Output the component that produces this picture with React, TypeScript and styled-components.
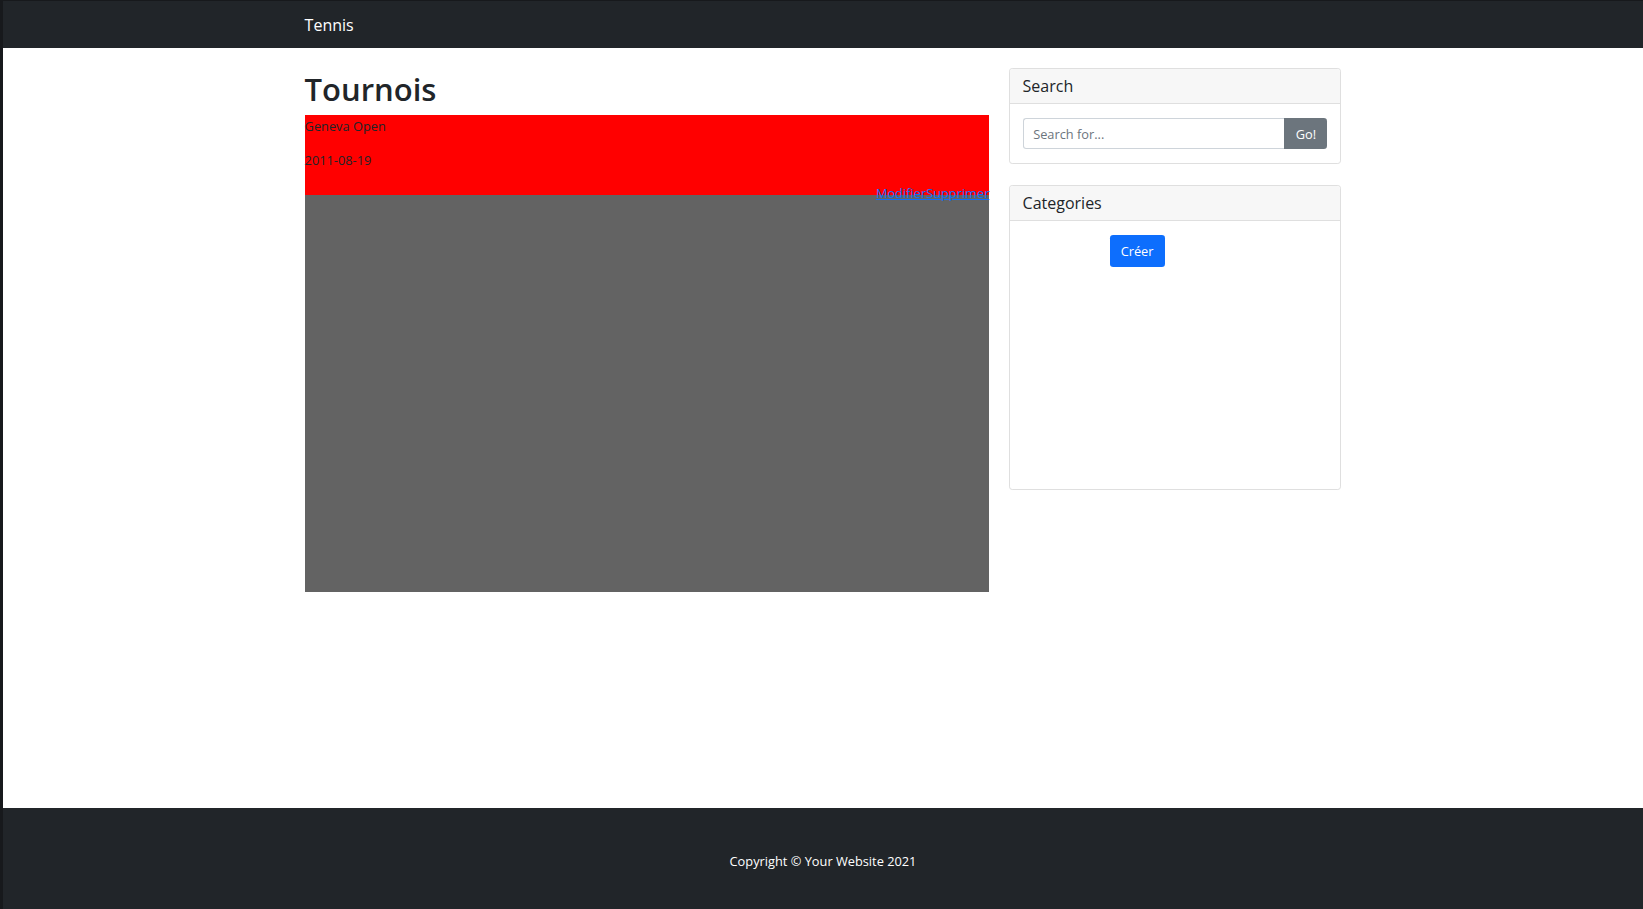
import React from "react";
import styled, { createGlobalStyle } from "styled-components";

const GlobalStyle = createGlobalStyle`
    * {
        box-sizing: border-box;
    }
    body {
        margin: 0;
        font-family: "Open Sans", "Noto Sans", sans-serif;
        font-size: 12.8px;
        line-height: 1.5;
        color: #212529;
        background: #ffffff;
    }
`

//STYLED COMPONENTS:
const Frame = styled.div`
    min-height: 100vh;
    display: flex;
    flex-direction: column;
    border-left: 3px solid #17191c;
    border-top: 1px solid #17191c;
`

const Container = styled.div`
    width: 1056px;
    margin: 0 auto;
    padding: 0 9.6px;
`

const Navbar = styled.nav`
    height: 47px;
    background: #212529;
    display: flex;
    align-items: center;
`

const Brand = styled.a`
    color: #ffffff;
    font-size: 16px;
    line-height: 24px;
    text-decoration: none;
`

const Main = styled.main`
    flex: 1;
    padding-top: 20px;
`

const Row = styled.div`
    display: grid;
    grid-template-columns: 684.8px 332.8px;
    column-gap: 19.2px;
    align-items: start;
`

const PageTitle = styled.h1`
    margin: 5px 0 9px;
    font-size: 31px;
    font-weight: 600;
    line-height: 33px;
`

const TournamentCard = styled.div`
    height: 80px;
    background: #ff0000;
    color: #212529;
    padding-top: 2px;
`

const TournamentLine = styled.p<{ $gap: number }>`
    margin: 0 0 ${(p) => p.$gap}px;
    line-height: 19px;
`

const Actions = styled.div`
    text-align: right;
    line-height: 19px;
`

const ActionLink = styled.a`
    color: #0d6efd;
    text-decoration: underline;
`

const Preview = styled.div`
    height: 397px;
    background: #636363;
`

const Card = styled.div`
    border: 1px solid #dfdfdf;
    border-radius: 3.2px;
    margin-bottom: 21px;
    background: #ffffff;
`

const CardHeader = styled.div`
    height: 35px;
    padding: 1px 13px 0;
    background: #f7f7f7;
    border-bottom: 1px solid #dfdfdf;
    border-radius: 3.2px 3.2px 0 0;
    font-size: 16px;
    font-weight: 500;
    line-height: 33px;
`

const CardBody = styled.div<{ $minHeight?: number }>`
    padding: 14px 13px 14px;
    min-height: ${(p) => (p.$minHeight ? `${p.$minHeight}px` : "auto")};
`

const InputGroup = styled.div`
    display: flex;
    height: 31px;
`

const SearchInput = styled.input`
    flex: 1;
    min-width: 0;
    height: 100%;
    padding: 0 9.6px;
    border: 1px solid #ced4da;
    border-right: none;
    border-radius: 3.2px 0 0 3.2px;
    font-family: inherit;
    font-size: 12.8px;
    color: #212529;
    outline: none;

    &::placeholder {
        color: #6c757d;
    }
`

const Button = styled.button<{ $variant: "secondary" | "primary" }>`
    height: 100%;
    padding: 0 9.6px;
    border: none;
    font-family: inherit;
    font-size: 12.8px;
    color: #ffffff;
    background: ${(p) => (p.$variant === "primary" ? "#0d6efd" : "#6c757d")};
    border-radius: ${(p) => (p.$variant === "primary" ? "3.2px" : "0 3.2px 3.2px 0")};
    cursor: pointer;
`

const GoButton = styled(Button)`
    width: 43px;
`

const CreateButton = styled(Button)`
    height: 32px;
    width: 55px;
    margin-left: 87px;
`

const Footer = styled.footer`
    height: 101px;
    background: #212529;
    color: #ffffff;
    display: flex;
    align-items: center;
    justify-content: center;
    padding-top: 7px;
`

const App = () => {
    return (
        <>
            <GlobalStyle />
            <Frame>
                <Navbar>
                    <Container>
                        <Brand href="#">Tennis</Brand>
                    </Container>
                </Navbar>
                <Main>
                    <Container>
                        <Row>
                            <div>
                                <PageTitle>Tournois</PageTitle>
                                <TournamentCard>
                                    <TournamentLine $gap={15}>Geneva Open</TournamentLine>
                                    <TournamentLine $gap={14}>2011-08-19</TournamentLine>
                                    <Actions>
                                        <ActionLink href="#">Modifier</ActionLink>
                                        <ActionLink href="#">Supprimer</ActionLink>
                                    </Actions>
                                </TournamentCard>
                                <Preview />
                            </div>
                            <div>
                                <Card>
                                    <CardHeader>Search</CardHeader>
                                    <CardBody>
                                        <InputGroup>
                                            <SearchInput type="text" placeholder="Search for..." />
                                            <GoButton $variant="secondary">Go!</GoButton>
                                        </InputGroup>
                                    </CardBody>
                                </Card>
                                <Card>
                                    <CardHeader>Categories</CardHeader>
                                    <CardBody $minHeight={268}>
                                        <CreateButton $variant="primary">Créer</CreateButton>
                                    </CardBody>
                                </Card>
                            </div>
                        </Row>
                    </Container>
                </Main>
                <Footer>Copyright © Your Website 2021</Footer>
            </Frame>
        </>
    )
}

export default App
